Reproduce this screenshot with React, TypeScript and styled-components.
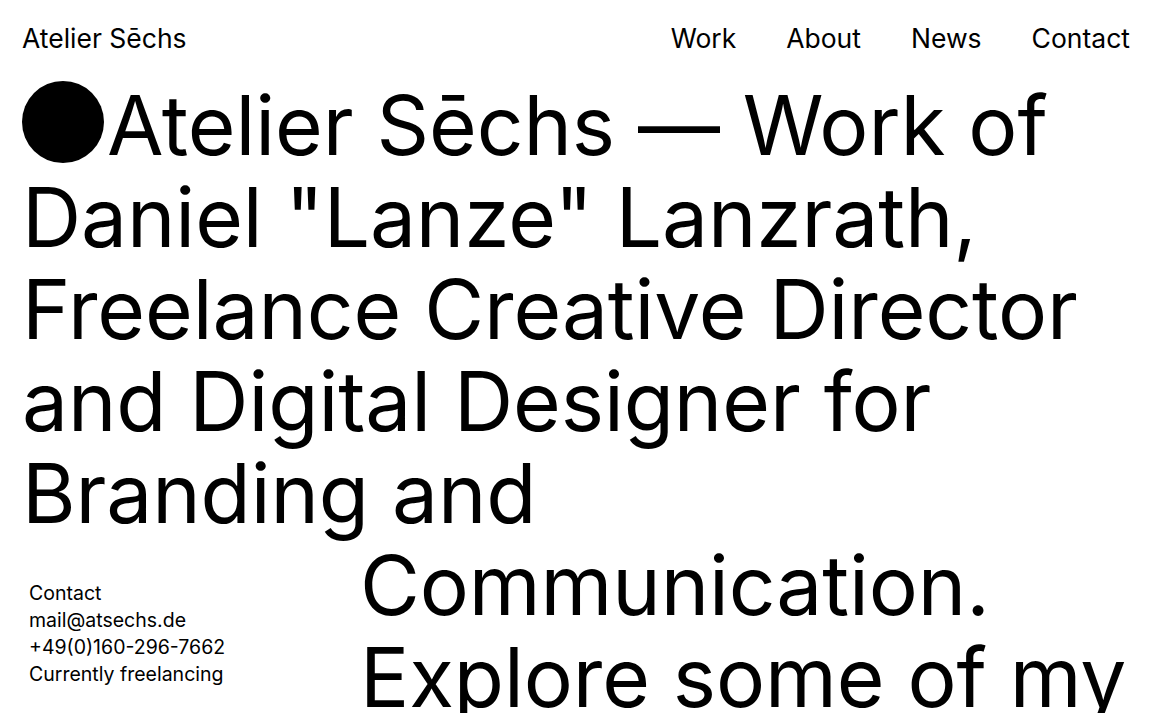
import React from "react";
import styled, { createGlobalStyle } from "styled-components";

const Global = createGlobalStyle`
  html, body { margin: 0; padding: 0; background: #fff; }
  body { font-family: Inter, "Noto Sans", sans-serif; color: #000; overflow: hidden; }
  * { box-sizing: border-box; }
`;

const Page = styled.div`
  width: 1152px;
  height: 713px;
  overflow: hidden;
  padding: 0 22px;
`;

const Header = styled.header`
  display: flex;
  justify-content: space-between;
  align-items: center;
  padding: 23px 0 26px;
  font-size: 26.5px;
  line-height: 31px;
`;

const Brand = styled.a`
  color: #000;
  text-decoration: none;
`;

const Nav = styled.nav`
  display: flex;
  gap: 50px;
`;

const NavLink = styled.a`
  color: #000;
  text-decoration: none;
`;

const Headline = styled.h1`
  margin: 0;
  font-weight: 400;
  font-size: 82px;
  line-height: 92px;
  letter-spacing: -0.1px;
`;

const Dot = styled.span`
  display: inline-block;
  width: 82px;
  height: 82px;
  border-radius: 50%;
  background: #000;
  vertical-align: -8px;
  margin-right: 3px;
`;

const Row = styled.div`
  display: grid;
  grid-template-columns: 338px 1fr;
`;

const ContactBlock = styled.address`
  font-style: normal;
  font-size: 19.5px;
  line-height: 27px;
  padding: 40px 0 0 7px;
`;

const ContactLine = styled.div``;

const Continuation = styled.div`
  font-size: 82px;
  line-height: 92px;
  letter-spacing: -0.1px;
  white-space: nowrap;
`;

export default function App() {
  return (
    <>
      <Global />
      <Page>
        <Header>
          <Brand href="#">Atelier Sēchs</Brand>
          <Nav>
            <NavLink href="#">Work</NavLink>
            <NavLink href="#">About</NavLink>
            <NavLink href="#">News</NavLink>
            <NavLink href="#">Contact</NavLink>
          </Nav>
        </Header>
        <Headline>
          <Dot />Atelier Sēchs — Work of<br />
          Daniel "Lanze" Lanzrath,<br />
          Freelance Creative Director<br />
          and Digital Designer for<br />
          Branding and
        </Headline>
        <Row>
          <ContactBlock>
            <ContactLine>Contact</ContactLine>
            <ContactLine>mail@atsechs.de</ContactLine>
            <ContactLine>+49(0)160-296-7662</ContactLine>
            <ContactLine>Currently freelancing</ContactLine>
          </ContactBlock>
          <Continuation>
            Communication.<br />
            Explore some of my
          </Continuation>
        </Row>
      </Page>
    </>
  );
}
